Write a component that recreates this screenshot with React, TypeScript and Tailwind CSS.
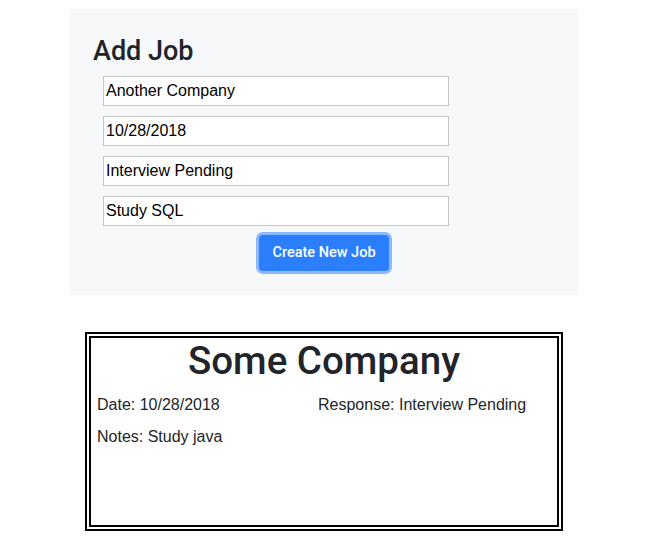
import React from "react";

export default function App() {
  const font = { fontFamily: "'Liberation Sans', Arial, sans-serif" };
  const head = { fontFamily: "Roboto, 'Liberation Sans', sans-serif" };
  return (
    <div className="min-h-[539px] w-[662px] bg-white text-[#212529]" style={font}>
      <div className="h-[9px]" />
      <div className="ml-[69px] w-[510px] h-[286px] bg-[#f7f8fa] pt-[26px]">
        <h3 className="ml-[24px] text-[27px] leading-[32px] font-medium" style={head}>Add Job</h3>
        <div className="ml-[34px] mt-[9px] flex flex-col gap-[10px] w-[346px]">
          {["Another Company", "10/28/2018", "Interview Pending", "Study SQL"].map((v) => (
            <input
              key={v}
              readOnly
              value={v}
              className="h-[30px] w-full border border-[#c8c8c8] bg-white px-[2px] text-[16px] text-black outline-none"
            />
          ))}
        </div>
        <div className="mt-[9px] flex justify-center">
          <button className="h-[36px] px-[13px] rounded-[4px] bg-[#2c7ffc] text-white text-[14.5px] font-medium ring-[3px] ring-[#8ab8fd]" style={head}>
            Create New Job
          </button>
        </div>
      </div>
      <div className="h-[37px]" />
      <div className="ml-[85px] w-[478px] h-[199px] border-[6px] border-double border-black">
        <h1 className="text-center text-[38.5px] leading-[46px] font-medium" style={head}>Some Company</h1>
        <div className="grid grid-cols-[221px_1fr] pl-[6px] mt-[9px] text-[16px] leading-[24px]">
          <p>Date: 10/28/2018</p>
          <p>Response: Interview Pending</p>
        </div>
        <p className="pl-[6px] mt-[8px] text-[16px] leading-[24px]">Notes: Study java</p>
      </div>
    </div>
  );
}
